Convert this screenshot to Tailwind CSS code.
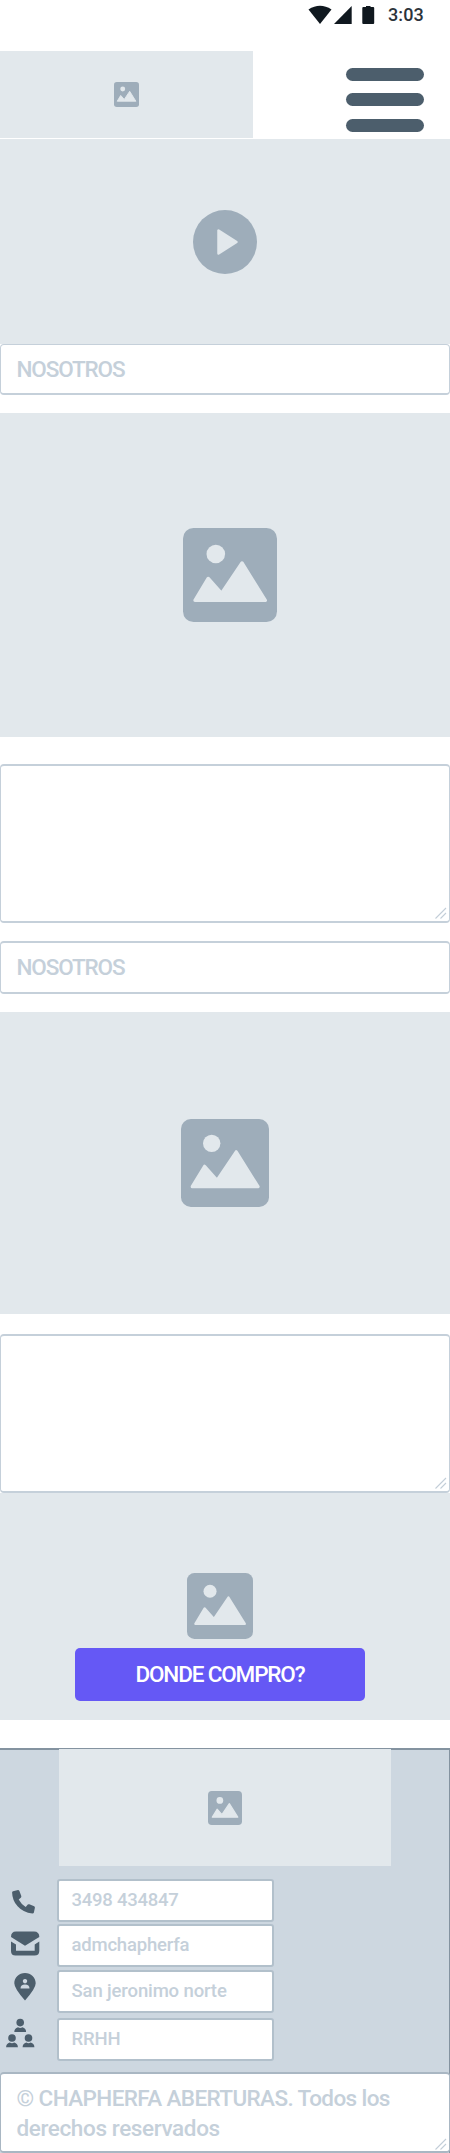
<!DOCTYPE html>
<html lang="es">
<head>
<meta charset="utf-8">
<title>Chapherfa Aberturas</title>
<script src="https://cdn.jsdelivr.net/npm/@tailwindcss/browser@4"></script>
</head>
<body class="bg-white">
<svg class="hidden">
  <symbol id="picture" viewBox="0 0 94 94">
    <rect width="94" height="94" rx="10.5" fill="#9eadba"/>
    <circle cx="32.8" cy="26" r="9.3" fill="#e2e8ec"/>
    <path d="M12 72.300L25.200 50.500L38.500 65.500L59 35L82.300 72.300Z" fill="#e2e8ec" stroke="#e2e8ec" stroke-width="3.400" stroke-linejoin="round"/>
  </symbol>
  <symbol id="grip" viewBox="0 0 12 12">
    <path d="M.5 11.500L11 1M5.500 11.500L11 6" stroke="#c3ced8" stroke-width="1.100" fill="none"/>
  </symbol>
</svg>
<div class="w-[450px] h-[2153px] flex flex-col overflow-hidden font-['Roboto',sans-serif] font-medium text-[#c5d0da]">
  <div class="h-[51px] shrink-0 flex items-start justify-end pr-[26px] text-[#10181f]">
    <svg class="w-[80px] h-[30px]" viewBox="304 0 80 30" fill="#10181f">
      <path d="M308.500 9.500Q320 2 331.500 9.500L320 24Z"/>
      <path d="M334 24L351.700 6V24Z"/>
      <path d="M362.300 8q0-1 1-1H366V6h4.500v1h2.700q1 0 1 1V23q0 1-1 1h-9.900q-1 0-1-1Z"/>
    </svg>
    <div class="ml-[4px] mt-[3px] w-[36px] text-[18px] leading-[24px] tracking-[0.1px] text-[#2b333b] whitespace-nowrap">3:03</div>
  </div>
  <header class="h-[87px] shrink-0 flex justify-between">
    <div class="w-[252.500px] bg-[#e2e8ec] flex items-center justify-center">
      <svg class="w-[25px] h-[25px]"><use href="#picture"/></svg>
    </div>
    <div class="w-[77.500px] mr-[26.500px] mt-[16.500px] flex flex-col gap-[12.500px]">
      <div class="h-[13.200px] rounded-full bg-[#4c5e6c]"></div>
      <div class="h-[13.200px] rounded-full bg-[#4c5e6c]"></div>
      <div class="h-[13.200px] rounded-full bg-[#4c5e6c]"></div>
    </div>
  </header>
  <section class="mt-px h-[205px] shrink-0 bg-[#e2e8ec] flex items-center justify-center">
    <svg class="w-[64px] h-[64px]" viewBox="0 0 64 64"><circle cx="32" cy="32" r="32" fill="#9eadba"/><path d="M25.500 20.500V43.500L43.500 32Z" fill="#e2e8ec" stroke="#e2e8ec" stroke-width="2.500" stroke-linejoin="round"/></svg>
  </section>
  <div class="h-[51px] shrink-0 rounded-[4px] border border-b-2 border-[#c5d0da] flex items-center pl-[15.500px]">
    <span class="text-[22.500px] leading-none tracking-[-1.150px]">NOSOTROS</span>
  </div>
  <section class="mt-[17.500px] h-[324.500px] shrink-0 bg-[#e2e8ec] flex items-center justify-center pl-[10px]">
    <svg class="w-[94px] h-[94px]"><use href="#picture"/></svg>
  </section>
  <div class="mt-[27px] h-[159px] shrink-0 rounded-[4px] border border-y-2 border-[#c5d0da] flex items-end justify-end pr-[2px] pb-[2px]">
    <svg class="w-[12px] h-[12px]"><use href="#grip"/></svg>
  </div>
  <div class="mt-[18px] h-[53px] shrink-0 rounded-[4px] border border-y-2 border-[#c5d0da] flex items-center pl-[15.500px]">
    <span class="text-[22.500px] leading-none tracking-[-1.150px]">NOSOTROS</span>
  </div>
  <section class="mt-[17.500px] h-[302px] shrink-0 bg-[#e2e8ec] flex items-center justify-center">
    <svg class="w-[88px] h-[88px]"><use href="#picture"/></svg>
  </section>
  <div class="mt-[20.500px] h-[159px] shrink-0 rounded-[4px] border border-y-2 border-[#c5d0da] flex items-end justify-end pr-[2px] pb-[2px]">
    <svg class="w-[12px] h-[12px]"><use href="#grip"/></svg>
  </div>
  <section class="h-[227px] shrink-0 bg-[#e2e8ec] flex flex-col items-center pt-[80px] pr-[10px]">
    <svg class="w-[66px] h-[66px] shrink-0"><use href="#picture"/></svg>
    <div class="mt-[8.500px] w-[290px] h-[53px] shrink-0 rounded-[5px] bg-[#6558f5] flex items-center justify-center text-white">
      <span class="text-[22.500px] leading-none tracking-[-1.150px]">DONDE COMPRO?</span>
    </div>
  </section>
  <footer class="mt-[28px] h-[405px] shrink-0 bg-[#cdd7e0] border-t-2 border-r border-[#8493a0] flex flex-col">
    <div class="-mt-px ml-[58.500px] w-[332.500px] h-[117px] shrink-0 bg-[#e2e8ec] flex items-center justify-center">
      <svg class="w-[34px] h-[34px]"><use href="#picture"/></svg>
    </div>
    <div class="mt-[13px] h-[184px] shrink-0 flex gap-[0.500px]">
      <svg class="w-[56px] h-[184px] shrink-0" viewBox="0 1879 56 184" fill="#4c5e6c">
        <path d="M13 1891.200L18 1890Q19 1890 19.400 1891L21.300 1896Q21.500 1897 20.800 1897.800L18.700 1899.500Q21.400 1904.500 25.700 1907L27.800 1904.600Q28.400 1904 29.300 1904.300L34.200 1906.300Q35.100 1906.800 34.900 1907.800L33.900 1912.600Q33.600 1913.500 32.500 1913.500Q23 1912.500 17.600 1906.300Q12.300 1900.500 12.100 1892.400Q12.100 1891.500 13 1891.200Z"/>
        <path d="M11 1937Q11 1931.500 16 1931.500H34Q39.300 1931.500 39.300 1937L25 1945.700Z"/>
        <path d="M11 1941.500L16 1944.500V1950.800H34.700V1944.500L39.300 1941.500V1951Q39.300 1955.500 34.500 1955.500H15.500Q11 1955.500 11 1951Z"/>
        <path fill-rule="evenodd" d="M25 2000.500Q14.300 1988.500 14.300 1983.300C14.300 1977.500 19 1973 25 1973S35.700 1977.500 35.700 1983.300Q35.700 1988.500 25 2000.500ZM25 1979a2.200 2.200 0 1 0 .01 0ZM20.500 1988.500H29.500Q29.500 1984.500 25 1984.500T20.500 1988.500Z"/>
        <circle cx="20.200" cy="2022.600" r="3.800"/><path d="M14.300 2032Q14.300 2028.300 18 2027.300Q20.200 2028.700 22.400 2027.300Q26.100 2028.300 26.100 2032Z"/>
        <circle cx="12" cy="2038" r="3.800"/><path d="M6.100 2047.300Q6.100 2043.600 9.800 2042.600Q12 2044 14.200 2042.600Q17.900 2043.600 17.900 2047.300Z"/>
        <circle cx="28.500" cy="2038" r="3.800"/><path d="M22.600 2047.300Q22.600 2043.600 26.300 2042.600Q28.500 2044 30.700 2042.600Q34.400 2043.600 34.400 2047.300Z"/>
      </svg>
      <div class="w-[217.500px] flex flex-col text-[18.500px] leading-none">
        <div class="h-[43px] rounded-[3px] border-2 border-[#b2c0cb] bg-white flex items-center pl-[13px]"><span class="tracking-[-0.250px]">3498 434847</span></div>
        <div class="mt-[2px] h-[43px] rounded-[3px] border-2 border-[#b2c0cb] bg-white flex items-center pl-[13px]"><span class="tracking-[-0.200px]">admchapherfa</span></div>
        <div class="mt-[3px] h-[43px] rounded-[3px] border-2 border-[#b2c0cb] bg-white flex items-center pl-[13px]"><span class="tracking-[-0.130px]">San jeronimo norte</span></div>
        <div class="mt-[4.500px] h-[43px] rounded-[3px] border-2 border-[#b2c0cb] bg-white flex items-center pl-[13px]"><span class="tracking-[-0.100px]">RRHH</span></div>
      </div>
    </div>
    <div class="mt-[9px] -mr-px h-[81px] shrink-0 rounded-[4px] border border-y-2 border-[#a9b7c3] bg-white flex items-end justify-between pr-[2px] pb-[1px]">
      <div class="pl-[15.500px] pb-[7.500px] text-[22.500px] leading-[30px] whitespace-nowrap"><div class="tracking-[-0.600px]">© CHAPHERFA ABERTURAS. Todos los</div><div class="tracking-[-0.380px]">derechos reservados</div></div>
      <svg class="w-[12px] h-[12px] shrink-0"><use href="#grip"/></svg>
    </div>
  </footer>
</div>
</body>
</html>
